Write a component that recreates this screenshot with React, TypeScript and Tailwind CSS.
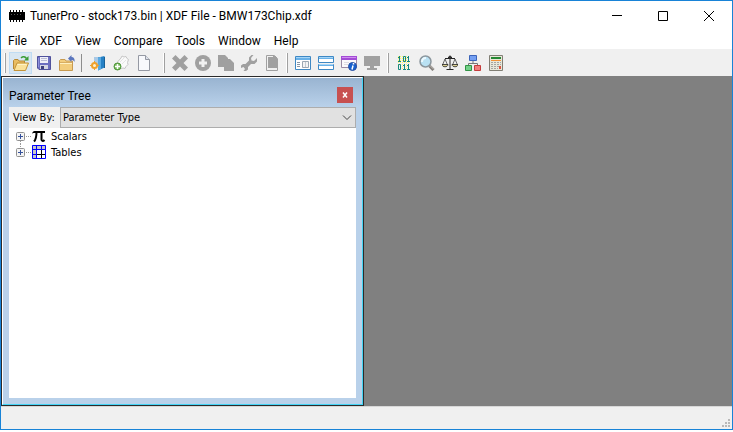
import { useState } from "react";
import type { ReactNode } from "react";

const menus = ["File", "XDF", "View", "Compare", "Tools", "Window", "Help"];

const viewModes = ["Parameter Type", "Category", "Address"];

type Tool = {
  label: string;
  icon: ReactNode;
  active?: boolean;
  disabled?: boolean;
};

const Icon = ({ children }: { children: ReactNode }) => (
  <svg width="16" height="16" viewBox="0 0 16 16" fill="none" aria-hidden="true">
    {children}
  </svg>
);

const ChipIcon = () => (
  <Icon>
    <rect x="0" y="4" width="16" height="8" fill="#000" />
    <path d="M1.5 2v12M4.5 2v12M7.5 2v12M10.5 2v12M13.5 2v12" stroke="#000" />
    <path d="M2 6.5h1M5 6.5h1M8 6.5h1M11 6.5h1" stroke="#555" />
  </Icon>
);

// file tools
const fileTools: Tool[] = [
  {
    label: "Open",
    active: true,
    icon: (
      <Icon>
        <path d="M.5 14V5.500l1-1H5l1 1.500h5.500V8" fill="#e9bd62" stroke="#b98a35" />
        <path d="M1 15.500 4 8h11.500l-3 7.500z" fill="#fbe29a" stroke="#c39338" />
        <path d="M4.500 9.500h9" stroke="#fff3c8" />
        <path d="M8 3c2-2 4-1.500 5.500.5" stroke="#3a9d35" strokeWidth="1.500" />
        <path d="M15.500 1v4.500H11z" fill="#3a9d35" />
      </Icon>
    ),
  },
  {
    label: "Save",
    icon: (
      <Icon>
        <path d="M1.500 1.500h13v13H3l-1.500-1.500z" fill="#6c6ec0" stroke="#50529c" />
        <path d="M4 2h8v6H4z" fill="#f0f0f8" />
        <path d="M5 3.500h6M5 5.500h6" stroke="#b9bbd5" />
        <path d="M4 10h8v4H4z" fill="#d5d6e2" />
        <path d="M5 11h3v3H5z" fill="#3c3e7c" />
        <path d="M2.500 3v9" stroke="#8f91da" />
      </Icon>
    ),
  },
  {
    label: "Close File",
    icon: (
      <Icon>
        <path d="M.5 15.500v-10l1-1H6l1 1.500h6.500v9.500z" fill="#f3cd7c" stroke="#c79a50" />
        <path d="M1 8.500h12" stroke="#fff0c0" />
        <path d="M1 7.500h12" stroke="#d9ae62" />
        <path d="M9 3.500 12.500 0v2c2.500 0 3.500 2 3 5-.8-1.500-1.500-2-3-2v2z" fill="#5b76bd" />
      </Icon>
    ),
  },
];

// definition tools
const xdfTools: Tool[] = [
  {
    label: "Open Definition",
    icon: (
      <Icon>
        <path d="M4 2h5v9H4z" fill="#a9c9e6" />
        <path d="M8 2.500 14.500 1v11.500L8 15.500z" fill="#2681c5" />
        <path d="M8 2.500 11 2v12l-3 1.500z" fill="#59aae2" />
        <path d="M14.500 2v11" stroke="#176197" />
        <circle cx="4.500" cy="10.500" r="2.500" fill="#fff2d0" stroke="#f0a22c" strokeWidth="2" />
        <path d="M4.500 6v2M4.500 13v2M0 10.500h2M7 10.500h2" stroke="#f0a22c" />
      </Icon>
    ),
  },
  {
    label: "New Definition",
    icon: (
      <Icon>
        <path d="M4.500 7 8 3l1-2 2 1 2-.5 1 2 1.500 1-1 3 .5 2-2 2-1 2-2-.5-2 .5z" fill="#fafafa" stroke="#c6c6c6" />
        <path d="m7 7 4-4M9 9l4-4" stroke="#e4e4e4" />
        <circle cx="4.500" cy="11.500" r="3.500" fill="#77ba58" stroke="#4d943a" />
        <path d="M4.500 9v5M2 11.500h5" stroke="#fff" strokeWidth="1.500" />
      </Icon>
    ),
  },
  {
    label: "New File",
    icon: (
      <Icon>
        <path d="M2.500.5h7l4 4v11h-11z" fill="#f8f9fc" stroke="#9599a3" />
        <path d="M9.500.5v4h4" fill="#dde1ea" stroke="#9599a3" />
      </Icon>
    ),
  },
];

const editTools: Tool[] = [
  {
    label: "Delete",
    disabled: true,
    icon: (
      <Icon>
        <path d="M3.500 0 8 4.500 12.500 0 16 3.500 11.500 8l4.500 4.500-3.500 3.500L8 11.500 3.500 16 0 12.500 4.500 8 0 3.500z" fill="#a0a0a0" />
      </Icon>
    ),
  },
  {
    label: "Add",
    disabled: true,
    icon: (
      <Icon>
        <circle cx="8" cy="8" r="8" fill="#a0a0a0" />
        <path d="M8 4v8M4 8h8" stroke="#f0f0f0" strokeWidth="3" />
      </Icon>
    ),
  },
  {
    label: "Copy",
    disabled: true,
    icon: (
      <Icon>
        <path d="M0 0h7l3 3v9H0z" fill="#a0a0a0" />
        <path d="M6 4h6l4 4v8H6z" fill="#a0a0a0" />
      </Icon>
    ),
  },
  {
    label: "Properties",
    disabled: true,
    icon: (
      <Icon>
        <path d="M12.500 0 10 3l.5 2.500L13 6l3-3v3.500L13.500 9H10l-3 3v2.500L5 16H2.500l1.500-2-1.500-2L0 13v-2.500L2 9h2.500L8 5.500V2.500L10.500 0z" fill="#a0a0a0" />
      </Icon>
    ),
  },
  {
    label: "Notes",
    disabled: true,
    icon: (
      <Icon>
        <path d="M2.500.5h8l3 3v12h-11z" stroke="#a0a0a0" />
        <path d="M4 2h5v4h4v7H4z" fill="#a0a0a0" />
        <path d="M9 1h2l2 2v3H9z" fill="#a0a0a0" />
      </Icon>
    ),
  },
];

// window tools
const windowTools: Tool[] = [
  {
    label: "Parameter Tree",
    icon: (
      <Icon>
        <path d="M.5 1.500h15v13H.5z" fill="#fff" stroke="#3e88c4" />
        <path d="M1 2h14v3H1z" fill="#69b1e8" />
        <path d="M1 2.500h14" stroke="#a6d5f7" />
        <path d="M2 7.500h3M2 9.500h3M2 11.500h3" stroke="#8795a5" />
        <path d="M7.500 6.500h6v6h-6z" fill="#f4f4f4" stroke="#9ba7b3" />
        <path d="M10.500 7v5" stroke="#c3cbd3" />
      </Icon>
    ),
  },
  {
    label: "Tile",
    icon: (
      <Icon>
        <path d="M.5 1.500h15v6H.5zM.5 9.500h15v5H.5z" fill="#fff" stroke="#3e88c4" />
        <path d="M1 2h14v2H1zM1 9h14v2H1z" fill="#69b1e8" />
        <path d="M1 2.500h14M1 9.500h14" stroke="#a6d5f7" />
      </Icon>
    ),
  },
  {
    label: "Item Information",
    icon: (
      <Icon>
        <path d="M.5 1.500h15v11H.5z" fill="#fbf9fc" stroke="#9a8ba5" />
        <path d="M0 1h16v4H0z" fill="#a34cd5" />
        <path d="M1 2.500h14" stroke="#d08df1" />
        <path d="M3 7.500h5M3 9.500h4" stroke="#dedde2" />
        <circle cx="11.500" cy="11.500" r="4" fill="#1761cf" stroke="#2a4fa0" />
        <path d="m12 10.500-1 4M12.500 8v1.500" stroke="#fff" strokeWidth="1.500" />
      </Icon>
    ),
  },
  {
    label: "Dashboard",
    disabled: true,
    icon: (
      <Icon>
        <path d="M0 1h16v10h-6v2h3v2H3v-2h3v-2H0z" fill="#a0a0a0" />
      </Icon>
    ),
  },
];

// utilities
const utilityTools: Tool[] = [
  {
    label: "Hex Editor",
    icon: (
      <Icon>
        <path
          d="M2 1.500h12M2 3.500h12M2 5.500h12M2 7.500h12M2 9.500h12M2 11.500h12M2 13.500h12"
          stroke="#fbf76a"
          strokeDasharray="1 1"
        />
        <path
          d="M3.500 1v6M2 2.500h2M2 6.500h3M7.500 1.500h2v5h-2zM12.500 1v6M11 2.500h2M11 6.500h3M2.500 9.500h2v5h-2zM8.500 9v6M7 10.500h2M7 14.500h3M12.500 9v6M11 10.500h2M11 14.500h3"
          stroke="#16877d"
        />
      </Icon>
    ),
  },
  {
    label: "Find",
    icon: (
      <Icon>
        <path d="m10.500 11 4 4" stroke="#85817d" strokeWidth="3" />
        <path d="m11.500 11 3 3" stroke="#c3beb8" />
        <circle cx="6.500" cy="6.500" r="5.500" fill="#b9e1f3" stroke="#8b969d" strokeWidth="1.500" />
        <path d="M3 7c0-2.500 1.500-4 4-4" stroke="#ecfaff" strokeWidth="2" />
      </Icon>
    ),
  },
  {
    label: "Compare",
    icon: (
      <Icon>
        <path d="M8 1v13M3 3.500h10M6 2.500h4M4.500 14.500h7" stroke="#252525" />
        <path d="m3 4-2.500 6M3 4l2.500 6M13 4l-2.500 6M13 4l2.500 6" stroke="#444" strokeWidth=".8" />
        <path d="M0 9.500h6c0 3-6 3-6 0zM10 9.500h6c0 3-6 3-6 0z" fill="#ddd293" stroke="#222" strokeWidth=".8" />
        <circle cx="8" cy="2" r="1.500" fill="#333" />
      </Icon>
    ),
  },
  {
    label: "Structure",
    icon: (
      <Icon>
        <path d="M8 6v3M3.500 11V8.500h9V11" stroke="#777" />
        <path d="M4.500.5h7v5h-7z" fill="#749ff2" stroke="#3c64b9" />
        <path d="M.5 10.500h6v5h-6z" fill="#72d087" stroke="#309344" />
        <path d="M9.500 10.500h6v5h-6z" fill="#f17c7c" stroke="#c43b3b" />
      </Icon>
    ),
  },
  {
    label: "Calculator",
    icon: (
      <Icon>
        <path d="M1.500.5h13v15h-13z" fill="#e8e7d9" stroke="#817f75" />
        <path d="M3 2h10v2H3z" fill="#248833" />
        <path d="M3 5.500h10" stroke="#f39337" />
        <path d="M3 7.500h10M3 9.500h10M3 11.500h10M3 13.500h7" stroke="#a5a5a0" strokeDasharray="2 1" />
        <path d="M11 11h2v3h-2z" fill="#dc5441" />
      </Icon>
    ),
  },
];

const PiIcon = () => (
  <Icon>
    <path d="M0 5.500C1 3 2 3 4 3h9v2H3C1.500 5 1.500 5 0 5.500z" fill="#000" />
    <path d="M4.500 4c0 4 0 7-2.500 9.500M9.500 4v7.500c0 1.500 1.500 2 3 .5" stroke="#000" strokeWidth="2" />
  </Icon>
);

const TableIcon = () => (
  <Icon>
    <path d="M0 1h14v14H0z" fill="#fff" />
    <path d="M0 1h14v4H0zM0 5h4v10H0z" fill="#c8c8c8" />
    <path d="M5 10.500h8M9.500 6v8" stroke="#000" />
    <path d="M1 5.500h12M4.500 2v12M1 10.500h3M9.500 2v3" stroke="#0000ff" />
    <path d="M.5 1.500h13v13H.5z" stroke="#0000ff" />
  </Icon>
);

const Grip = () => (
  <div className="flex w-2 justify-center">
    <div className="h-5 w-0.5 border-r border-[#a0a0a0] bg-white" />
  </div>
);

const ToolGroup = ({ tools }: { tools: Tool[] }) => (
  <div className="flex">
    {tools.map((tool) => (
      <button
        key={tool.label}
        aria-label={tool.label}
        disabled={tool.disabled}
        className={
          tool.active
            ? "flex h-[22px] w-[23px] items-center justify-center border border-[#c0dcf3] bg-[#d8e6f2]"
            : "flex h-[22px] w-[23px] items-center justify-center"
        }
      >
        {tool.icon}
      </button>
    ))}
  </div>
);

const TreeItem = ({ label, icon, last }: { label: string; icon: ReactNode; last?: boolean }) => {
  const [open, setOpen] = useState(false);

  return (
    <li className="flex h-4 items-center">
      <button
        aria-label={`Expand ${label}`}
        aria-expanded={open}
        onClick={() => setOpen(!open)}
        className="h-4 w-4"
      >
        <svg width="16" height="16" viewBox="0 0 16 16" fill="none" aria-hidden="true">
          <path d={last ? "M4.500 0v4" : "M4.500 13v3"} stroke="#999" strokeDasharray="1 1" />
          <path d="M10 8.500h6" stroke="#999" strokeDasharray="1 1" />
          <rect x=".5" y="4.500" width="8" height="8" rx="1" fill="#f4f4f4" stroke="#919191" />
          <path d="M2 8.500h5" stroke="#35519b" />
          {!open && <path d="M4.500 6v5" stroke="#35519b" />}
        </svg>
      </button>
      {icon}
      <span className="ml-[3px] pt-0.5">{label}</span>
    </li>
  );
};

const App = () => {
  const [viewBy, setViewBy] = useState(viewModes[0]);
  const [showTree, setShowTree] = useState(true);

  return (
    <div className="h-screen bg-white pb-0.5 font-[Roboto,sans-serif] text-xs text-black">
      <div className="flex h-full flex-col border border-[#1883d7] bg-[#f0f0f0]">
        {/* Title bar */}
        <header className="flex h-[30px] items-center bg-white pl-2">
          <ChipIcon />
          <h1 className="ml-[5px] flex-1">TunerPro - stock173.bin | XDF File - BMW173Chip.xdf</h1>
          <button aria-label="Minimize" className="flex h-full w-[46px] items-center justify-center">
            <svg width="10" height="10" stroke="#000"><path d="M0 4.500h10" /></svg>
          </button>
          <button aria-label="Maximize" className="flex h-full w-[46px] items-center justify-center">
            <svg width="10" height="10" stroke="#000" fill="none"><path d="M.5.500h9v9h-9z" /></svg>
          </button>
          <button aria-label="Close" className="flex h-full w-[46px] items-center justify-center">
            <svg width="10" height="10" stroke="#000"><path d="m0 0 10 10M10 0 0 10" /></svg>
          </button>
        </header>

        {/* Menu */}
        <nav className="flex h-[18px] items-end gap-[13px] bg-white pl-[7px]">
          {menus.map((menu) => (
            <button key={menu}>{menu}</button>
          ))}
        </nav>

        {/* Toolbar */}
        <div role="toolbar" className="flex h-[27px] items-center">
          <Grip />
          <ToolGroup tools={fileTools} />
          <div className="flex w-2 pl-[3px]">
            <div className="h-[18px] w-px bg-[#8d8d8d]" />
          </div>
          <ToolGroup tools={xdfTools} />
          <div className="w-[5px]" />
          <Grip />
          <ToolGroup tools={editTools} />
          <Grip />
          <ToolGroup tools={windowTools} />
          <div className="w-px" />
          <Grip />
          <ToolGroup tools={utilityTools} />
        </div>

        {/* Workspace */}
        <main className="flex min-h-0 flex-1 bg-[#808080]">
          {showTree && (
            <section className="flex w-[363px] flex-col border border-[#2b2b2b] bg-[#b9d1ea]">
              <div className="flex flex-1 flex-col border-t border-r border-b border-l border-t-white border-r-[#43d4f5] border-b-[#43d4f5] border-l-white px-1.5 pb-1.5">
                <div className="-mx-1.5 flex h-[29px] items-center justify-between bg-linear-to-b from-[#99b4d1] to-[#b9d1ea] pt-1 pr-[9px] pl-1.5">
                  <h2 className="pt-0.5">Parameter Tree</h2>
                  <button
                    aria-label="Close Parameter Tree"
                    onClick={() => setShowTree(false)}
                    className="flex h-4 w-4 items-center justify-center bg-[#c75050]"
                  >
                    <svg width="6" height="6" stroke="#fff" strokeWidth="1.500"><path d="m1 .5 4 5M5 .5l-4 5" /></svg>
                  </button>
                </div>
                <div className="flex h-[21px] items-center bg-[#f0f0f0] font-['DejaVu_Sans_Condensed','Noto_Sans',sans-serif] text-[11px]">
                  <label htmlFor="view-by" className="w-[51px] pt-px pl-1">View By:</label>
                  <div className="relative h-full flex-1">
                    <select
                      id="view-by"
                      value={viewBy}
                      onChange={(e) => setViewBy(e.target.value)}
                      className="h-full w-full appearance-none border border-[#adadad] bg-[#e1e1e1] pt-0.5 pl-0.5"
                    >
                      {viewModes.map((mode) => (
                        <option key={mode}>{mode}</option>
                      ))}
                    </select>
                    <svg className="pointer-events-none absolute top-2 right-1" width="10" height="6" fill="none" stroke="#444">
                      <path d="m1 .5 4 4 4-4" />
                    </svg>
                  </div>
                </div>
                <ul className="flex-1 bg-white pl-[7px] font-['DejaVu_Sans_Condensed','Noto_Sans',sans-serif] text-[11px]">
                  <TreeItem label="Scalars" icon={<PiIcon />} />
                  <TreeItem label="Tables" icon={<TableIcon />} last />
                </ul>
              </div>
            </section>
          )}
        </main>

        {/* Status bar */}
        <footer className="flex h-[23px] items-end justify-end border-t border-[#d7d7d7] p-0.5">
          <svg width="8" height="8" fill="#b8b8b8" aria-hidden="true">
            <path d="M6 0h2v2H6zM3 3h2v2H3zM6 3h2v2H6zM0 6h2v2H0zM3 6h2v2H3zM6 6h2v2H6z" />
          </svg>
        </footer>
      </div>
    </div>
  );
};

export default App;
